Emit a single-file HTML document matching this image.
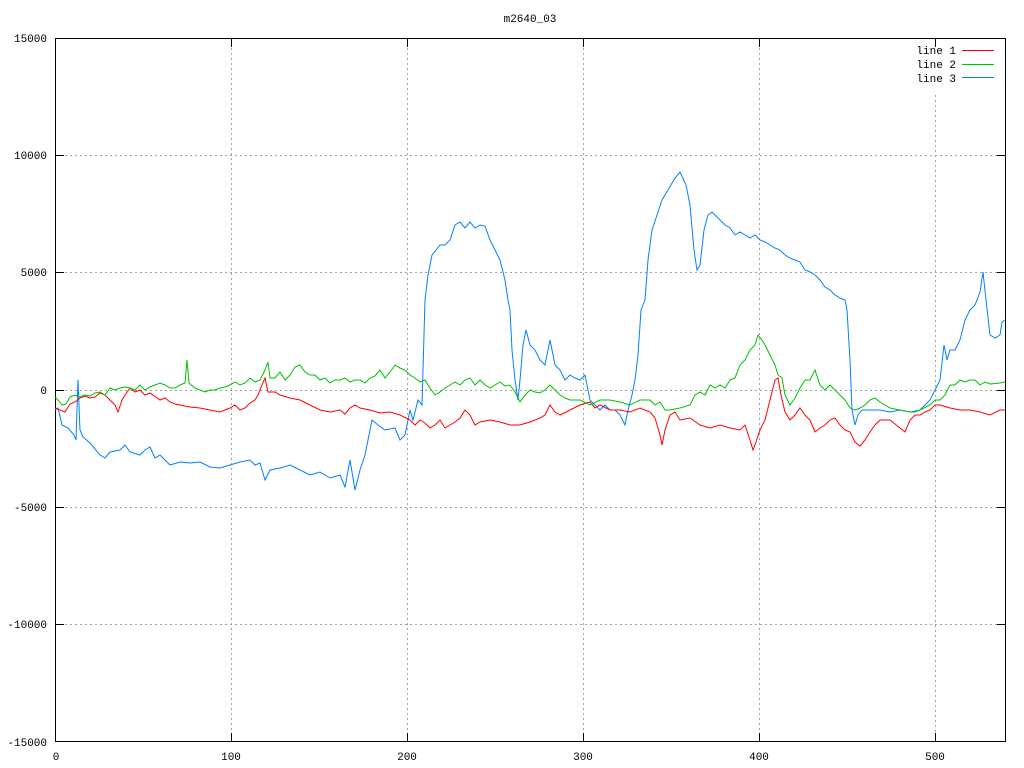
<!DOCTYPE html>
<html><head><meta charset="utf-8"><style>
html,body{margin:0;padding:0;background:#fff;}
svg{display:block;}
text{font-family:"Liberation Mono","DejaVu Sans Mono",monospace;font-size:11px;fill:#000;}
</style></head><body>
<svg width="1024" height="768" viewBox="0 0 1024 768" xmlns="http://www.w3.org/2000/svg">
<rect width="1024" height="768" fill="#fff"/>
<g stroke="#a0a0a0" stroke-width="1" stroke-dasharray="2,3">
<line x1="55" y1="155.5" x2="1006" y2="155.5"/>
<line x1="55" y1="272.5" x2="1006" y2="272.5"/>
<line x1="55" y1="390.5" x2="1006" y2="390.5"/>
<line x1="55" y1="507.5" x2="1006" y2="507.5"/>
<line x1="55" y1="624.5" x2="1006" y2="624.5"/>
<line x1="231.5" y1="38" x2="231.5" y2="742"/>
<line x1="407.5" y1="38" x2="407.5" y2="742"/>
<line x1="583.5" y1="38" x2="583.5" y2="742"/>
<line x1="759.5" y1="38" x2="759.5" y2="742"/>
<line x1="935.5" y1="95" x2="935.5" y2="742"/>
</g>
<rect x="55.5" y="38.5" width="950" height="703" fill="none" stroke="#000" stroke-width="1"/>
<g stroke="#000" stroke-width="1">
<line x1="55" y1="155.5" x2="64" y2="155.5"/><line x1="997" y1="155.5" x2="1006" y2="155.5"/>
<line x1="55" y1="272.5" x2="64" y2="272.5"/><line x1="997" y1="272.5" x2="1006" y2="272.5"/>
<line x1="55" y1="390.5" x2="64" y2="390.5"/><line x1="997" y1="390.5" x2="1006" y2="390.5"/>
<line x1="55" y1="507.5" x2="64" y2="507.5"/><line x1="997" y1="507.5" x2="1006" y2="507.5"/>
<line x1="55" y1="624.5" x2="64" y2="624.5"/><line x1="997" y1="624.5" x2="1006" y2="624.5"/>
<line x1="231.5" y1="733" x2="231.5" y2="742"/><line x1="231.5" y1="38" x2="231.5" y2="47"/>
<line x1="407.5" y1="733" x2="407.5" y2="742"/><line x1="407.5" y1="38" x2="407.5" y2="47"/>
<line x1="583.5" y1="733" x2="583.5" y2="742"/><line x1="583.5" y1="38" x2="583.5" y2="47"/>
<line x1="759.5" y1="733" x2="759.5" y2="742"/><line x1="759.5" y1="38" x2="759.5" y2="47"/>
<line x1="935.5" y1="733" x2="935.5" y2="742"/><line x1="935.5" y1="38" x2="935.5" y2="47"/>
</g>
<text x="530" y="22" text-anchor="middle">m2640_03</text>
<g text-anchor="end">
<text x="47" y="42">15000</text>
<text x="47" y="159">10000</text>
<text x="47" y="276">5000</text>
<text x="47" y="394">0</text>
<text x="47" y="511">-5000</text>
<text x="47" y="628">-10000</text>
<text x="47" y="746">-15000</text>
</g>
<g text-anchor="middle">
<text x="56" y="760">0</text>
<text x="231" y="760">100</text>
<text x="407" y="760">200</text>
<text x="583" y="760">300</text>
<text x="759" y="760">400</text>
<text x="935" y="760">500</text>
</g>
<g text-anchor="end">
<text x="956" y="54">line 1</text>
<text x="956" y="68">line 2</text>
<text x="956" y="82">line 3</text>
</g>
<line x1="962" y1="50.5" x2="994" y2="50.5" stroke="#ff0000"/>
<line x1="962" y1="64.5" x2="994" y2="64.5" stroke="#00c000"/>
<line x1="962" y1="77.5" x2="994" y2="77.5" stroke="#0080ff"/>
<polyline fill="none" stroke="#0080ff" stroke-width="1" points="55,410 58,408 62,425 68,428 74,435 76,440 78,380 80,430 83,437 90,443 100,455 105,458 110,452 120,450 125,445 130,452 140,455 145,450 150,447 155,458 160,455 170,465 180,462 190,463 200,462 210,467 220,468 230,465 240,462 250,460 255,465 260,463 265,480 270,470 280,468 290,465 300,470 310,475 320,472 330,478 340,475 345,487 350,460 355,490 360,470 365,455 368,440 372,420 378,425 385,430 395,428 400,440 405,435 410,410 413,420 418,400 422,405 425,300 428,275 432,255 440,245 445,245 450,240 455,225 460,222 465,228 470,222 475,228 480,225 485,226 490,240 495,250 500,260 505,280 508,300 510,310 512,350 515,380 518,400 520,380 523,345 526,330 530,345 535,350 540,360 545,365 550,340 555,365 560,370 565,380 570,375 575,378 580,380 585,375 590,400 600,410 605,405 610,410 615,410 620,415 625,425 628,410 632,395 635,380 638,355 641,310 645,300 648,260 652,230 657,215 662,200 668,190 675,178 680,172 686,185 690,205 694,250 697,270 700,265 704,230 708,215 712,212 715,215 720,220 725,225 730,228 735,235 740,232 745,235 750,238 755,235 760,240 765,242 770,245 775,248 780,250 785,255 790,258 795,260 800,262 805,270 810,272 815,275 820,280 825,287 830,290 835,295 840,298 845,300 847,310 850,360 852,410 855,425 858,415 862,410 870,410 880,410 890,412 900,410 910,412 915,412 920,410 925,405 930,400 935,390 940,380 944,345 947,360 950,350 955,350 960,340 965,320 970,310 975,305 980,292 983,272 986,300 990,335 995,338 1000,335 1002,322 1005,320"/>
<polyline fill="none" stroke="#ff0000" stroke-width="1" points="55,408 60,410 65,412 70,404 75,402 80,398 85,396 90,398 95,397 100,393 105,395 110,400 115,405 118,412 122,400 125,395 130,388 135,392 140,390 145,395 150,393 160,400 165,398 170,402 175,404 180,405 190,407 200,408 210,410 220,412 230,408 235,405 240,410 245,408 250,403 255,400 258,395 262,385 265,378 268,392 275,392 280,395 290,398 300,400 310,405 320,410 330,412 340,410 345,414 350,408 355,405 360,408 370,410 380,413 390,412 400,415 410,420 415,425 420,420 425,423 430,428 435,425 440,420 445,428 450,425 455,422 460,418 465,410 470,415 475,425 480,422 490,420 500,422 510,425 520,425 530,422 540,418 545,415 550,405 555,412 560,415 570,410 580,405 590,402 595,408 600,405 610,410 620,410 630,412 640,408 650,412 655,418 660,435 662,445 665,430 670,415 675,412 680,420 690,418 700,425 710,428 720,425 730,428 740,430 745,425 750,440 753,450 756,442 760,430 765,420 770,400 775,380 778,378 781,395 785,412 790,420 795,415 800,408 805,415 810,420 815,432 820,428 825,425 830,420 835,418 840,425 845,430 850,432 855,442 860,446 865,440 870,432 875,425 880,420 890,420 900,428 905,432 910,420 915,415 920,415 925,412 930,410 935,405 940,405 950,408 960,410 970,410 980,412 990,415 1000,410 1005,410"/>
<polyline fill="none" stroke="#00c000" stroke-width="1" points="55,397 58,400 62,405 66,404 70,397 75,395 80,397 85,395 90,396 95,393 100,392 105,395 110,388 115,390 120,388 125,387 130,388 135,390 140,385 145,390 150,387 155,385 160,383 165,385 170,388 175,388 180,385 185,383 187,360 189,383 195,388 200,390 205,392 210,390 215,390 220,388 225,387 230,385 235,382 240,385 245,383 250,378 255,382 260,380 265,370 268,362 270,378 275,378 280,372 285,380 290,375 295,367 300,365 305,372 310,375 315,375 320,380 325,378 330,383 335,380 340,380 345,378 350,382 355,380 360,380 365,383 370,378 375,376 380,370 385,378 390,372 395,365 400,368 405,370 410,375 415,378 420,382 425,380 430,388 435,395 440,392 445,388 450,385 455,382 460,385 465,380 470,378 475,385 480,380 485,385 490,388 495,385 500,382 505,386 510,385 515,392 520,402 525,395 530,390 535,392 540,393 545,390 550,385 555,390 560,395 565,398 570,400 580,400 590,405 600,400 610,400 620,402 630,405 640,400 650,400 655,405 660,402 665,410 670,410 680,408 690,405 695,395 700,392 705,395 710,385 715,388 720,385 725,388 730,380 735,378 740,365 745,360 750,350 755,345 758,335 762,340 765,345 770,355 775,365 778,375 782,378 785,395 790,405 795,398 800,388 805,380 810,380 815,370 820,385 825,390 830,385 835,390 840,395 845,400 850,408 855,410 860,408 865,405 870,400 875,398 880,402 885,405 890,408 900,410 910,412 920,410 930,405 935,400 940,400 945,395 950,385 955,385 960,380 965,382 970,380 975,380 980,385 985,382 990,384 1000,383 1005,382"/>
</svg>
</body></html>
